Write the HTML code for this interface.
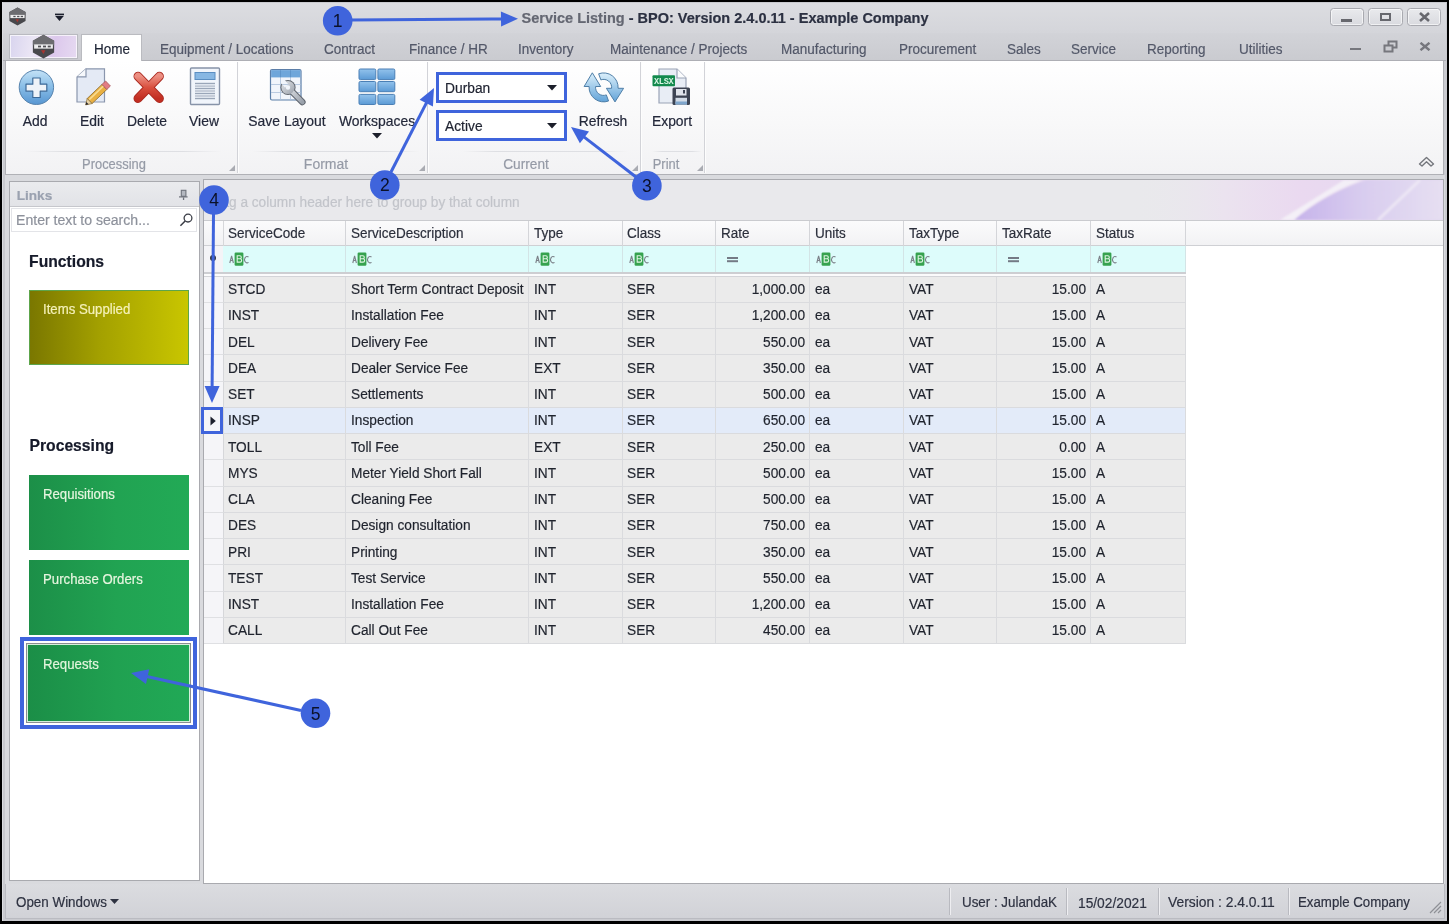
<!DOCTYPE html>
<html><head><meta charset="utf-8">
<style>
*{box-sizing:border-box;margin:0;padding:0}
html,body{width:1449px;height:924px;overflow:hidden;background:#000;font-family:"Liberation Sans",sans-serif;color:#2b2f3b}
div,span,svg{position:absolute}
.t{white-space:nowrap;line-height:1;-webkit-text-stroke:0.2px currentColor}
#root{left:0;top:0;width:1449px;height:924px;will-change:transform}
.gsep{top:62px;width:2px;height:111px;background:linear-gradient(90deg,#d2d3d8 50%,#fdfdfd 50%)}
.gline{top:151px;height:1px;background:linear-gradient(90deg,rgba(222,223,227,0),#dedfe3 20%,#dedfe3 80%,rgba(222,223,227,0))}
.tile{left:29px;width:160px;height:75px}
</style></head><body><div id="root">

<div style="left:2px;top:2px;width:1445px;height:919px;background:#c9cacf;border-left:1px solid #dcdde1"></div>
<div style="left:3px;top:3px;width:1443px;height:30px;background:linear-gradient(#dcdde1,#d4d5da)"></div>
<div style="left:3px;top:33px;width:1443px;height:27px;background:linear-gradient(#d2d3d8,#cacbd0)"></div>
<div style="left:3px;top:60px;width:1443px;height:1px;background:#aeafb5"></div>
<svg style="left:8px;top:7px" width="19" height="19" viewBox="0 0 20 20"><polygon points="10,0.5 18.5,5.3 18.5,14.7 10,19.5 1.5,14.7 1.5,5.3" fill="#48484c"/><polygon points="10,0.5 18.5,5.3 18.5,9 1.5,9 1.5,5.3" fill="#6c6c70"/><rect x="2.5" y="8.3" width="15" height="3.4" fill="#ededee"/><rect x="5.6" y="9.3" width="2.4" height="1.4" fill="#505055"/><rect x="9.6" y="9.3" width="2.4" height="1.4" fill="#505055"/><rect x="13.4" y="9.3" width="2.4" height="1.4" fill="#505055"/><path d="M8 13 l2 3 l1.5 -3z" fill="#a8342f"/></svg>
<svg style="left:55px;top:13px" width="9" height="8" viewBox="0 0 9 8"><rect x="0" y="0.6" width="9" height="1.4" fill="#1b1e2c"/><polygon points="0,2.8 9,2.8 4.5,8" fill="#1b1e2c"/></svg>
<span class="t" style="top:11.13px;font-size:14.50px;color:#646772;font-weight:bold;left:521.5px">Service Listing<span style="position:static;color:#2c3142"> - BPO: Version 2.4.0.11 - Example Company</span></span>
<div style="left:1330px;top:8px;width:34px;height:18px;border:1px solid #a9aab0;border-radius:3.5px;background:linear-gradient(#e9eaed,#d9dadf);box-shadow:inset 0 0 0 1px rgba(255,255,255,0.6)"></div>
<div style="left:1368px;top:8px;width:35px;height:18px;border:1px solid #a9aab0;border-radius:3.5px;background:linear-gradient(#e9eaed,#d9dadf);box-shadow:inset 0 0 0 1px rgba(255,255,255,0.6)"></div>
<div style="left:1407px;top:8px;width:34px;height:18px;border:1px solid #a9aab0;border-radius:3.5px;background:linear-gradient(#e9eaed,#d9dadf);box-shadow:inset 0 0 0 1px rgba(255,255,255,0.6)"></div>
<div style="left:1341px;top:19px;width:11px;height:2.5px;background:#67686e"></div>
<div style="left:1380px;top:13px;width:11px;height:8px;border:2px solid #67686e"></div>
<svg style="left:1418px;top:12px" width="13" height="10" viewBox="0 0 13 10"><path d="M2 1 L11 9 M11 1 L2 9" stroke="#67686e" stroke-width="2.6"/></svg>
<div style="left:1350px;top:48px;width:11px;height:2px;background:#76777d"></div>
<svg style="left:1383px;top:40px" width="15" height="13" viewBox="0 0 15 13"><rect x="5.5" y="1.5" width="8" height="6" fill="none" stroke="#76777d" stroke-width="2"/><rect x="1.5" y="5.5" width="8" height="6" fill="#cbccd1" stroke="#76777d" stroke-width="2"/></svg>
<svg style="left:1419px;top:42px" width="12" height="9" viewBox="0 0 12 9"><path d="M1.5 0.8 L10.5 8.2 M10.5 0.8 L1.5 8.2" stroke="#76777d" stroke-width="2.4"/></svg>
<div style="left:9px;top:34px;width:69px;height:25px;border:1px solid #b9bac0;background:linear-gradient(100deg,#d8d4ee,#ebe6f5 35%,#dcc8ec 65%,#e6daf1)"></div>
<div style="left:10px;top:35px;width:67px;height:23px;border:1px solid rgba(255,255,255,0.7)"></div>
<svg style="left:31px;top:34px" width="25" height="25" viewBox="0 0 20 20"><polygon points="10,0.5 18.5,5.3 18.5,14.7 10,19.5 1.5,14.7 1.5,5.3" fill="#48484c"/><polygon points="10,0.5 18.5,5.3 18.5,9 1.5,9 1.5,5.3" fill="#6c6c70"/><rect x="2.5" y="8.3" width="15" height="3.4" fill="#ededee"/><rect x="5.6" y="9.3" width="2.4" height="1.4" fill="#505055"/><rect x="9.6" y="9.3" width="2.4" height="1.4" fill="#505055"/><rect x="13.4" y="9.3" width="2.4" height="1.4" fill="#505055"/><path d="M8 13 l2 3 l1.5 -3z" fill="#a8342f"/></svg>
<div style="left:81px;top:34px;width:61px;height:28px;background:#fff;border:1px solid #babbc0;border-bottom:none"></div>
<span class="t" style="top:41.90px;font-size:14.18px;color:#1f2536;left:93.5px;transform:scaleX(0.9524);transform-origin:0 0">Home</span>
<span class="t" style="top:41.90px;font-size:14.18px;color:#535869;left:160px;transform:scaleX(0.9524);transform-origin:0 0">Equipment / Locations</span>
<span class="t" style="top:41.90px;font-size:14.18px;color:#535869;left:324px;transform:scaleX(0.9524);transform-origin:0 0">Contract</span>
<span class="t" style="top:41.90px;font-size:14.18px;color:#535869;left:409px;transform:scaleX(0.9524);transform-origin:0 0">Finance / HR</span>
<span class="t" style="top:41.90px;font-size:14.18px;color:#535869;left:518px;transform:scaleX(0.9524);transform-origin:0 0">Inventory</span>
<span class="t" style="top:41.90px;font-size:14.18px;color:#535869;left:610px;transform:scaleX(0.9524);transform-origin:0 0">Maintenance / Projects</span>
<span class="t" style="top:41.90px;font-size:14.18px;color:#535869;left:781px;transform:scaleX(0.9524);transform-origin:0 0">Manufacturing</span>
<span class="t" style="top:41.90px;font-size:14.18px;color:#535869;left:899px;transform:scaleX(0.9524);transform-origin:0 0">Procurement</span>
<span class="t" style="top:41.90px;font-size:14.18px;color:#535869;left:1007px;transform:scaleX(0.9524);transform-origin:0 0">Sales</span>
<span class="t" style="top:41.90px;font-size:14.18px;color:#535869;left:1071px;transform:scaleX(0.9524);transform-origin:0 0">Service</span>
<span class="t" style="top:41.90px;font-size:14.18px;color:#535869;left:1147px;transform:scaleX(0.9524);transform-origin:0 0">Reporting</span>
<span class="t" style="top:41.90px;font-size:14.18px;color:#535869;left:1239px;transform:scaleX(0.9524);transform-origin:0 0">Utilities</span>
<div style="left:5px;top:61px;width:1439px;height:114px;background:linear-gradient(#ffffff,#f8f8f9 55%,#f2f2f4);border:1px solid #b0b1b6;border-top:none"></div>
<div class="gsep" style="left:237px"></div>
<div class="gsep" style="left:427px"></div>
<div class="gsep" style="left:640px"></div>
<div class="gsep" style="left:704px"></div>
<div class="gline" style="left:25px;width:197px"></div>
<div class="gline" style="left:252px;width:168px"></div>
<div class="gline" style="left:462px;width:166px"></div>
<div class="gline" style="left:652px;width:50px"></div>
<span class="t" style="top:156.69px;font-size:14.19px;color:#959aa6;left:53.50px;width:120px;text-align:center;transform:scaleX(0.9091);transform-origin:50% 0">Processing</span>
<span class="t" style="top:155.66px;font-size:15.40px;color:#959aa6;left:266.30px;width:120px;text-align:center;transform:scaleX(0.9091);transform-origin:50% 0">Format</span>
<span class="t" style="top:155.94px;font-size:15.07px;color:#959aa6;left:466.40px;width:120px;text-align:center;transform:scaleX(0.9091);transform-origin:50% 0">Current</span>
<span class="t" style="top:156.69px;font-size:14.19px;color:#959aa6;left:605.50px;width:120px;text-align:center;transform:scaleX(0.9091);transform-origin:50% 0">Print</span>
<svg style="left:229px;top:165px" width="6" height="6" viewBox="0 0 6 6"><polygon points="6,0 6,6 0,6" fill="#a9abb2"/></svg>
<svg style="left:419px;top:165px" width="6" height="6" viewBox="0 0 6 6"><polygon points="6,0 6,6 0,6" fill="#a9abb2"/></svg>
<svg style="left:632px;top:165px" width="6" height="6" viewBox="0 0 6 6"><polygon points="6,0 6,6 0,6" fill="#a9abb2"/></svg>
<svg style="left:697px;top:165px" width="6" height="6" viewBox="0 0 6 6"><polygon points="6,0 6,6 0,6" fill="#a9abb2"/></svg>
<svg style="left:18px;top:69px" width="37" height="37" viewBox="0 0 37 37"><defs><linearGradient id="ga" x1="0" y1="0" x2="0" y2="1"><stop offset="0" stop-color="#c4e2f6"/><stop offset="0.45" stop-color="#8cc0e8"/><stop offset="1" stop-color="#5796d2"/></linearGradient></defs><circle cx="18.4" cy="18.3" r="17.2" fill="url(#ga)" stroke="#5783ad" stroke-width="1"/><path d="M14.8 9 h7.4 v6.2 h6.6 v7 h-6.6 v6.3 h-7.4 v-6.3 h-6.8 v-7 h6.8z" fill="#eef3f8" stroke="#3c6a98" stroke-width="1.2" stroke-linejoin="round"/></svg>
<svg style="left:76px;top:68px" width="37" height="39" viewBox="0 0 37 39"><path d="M10 0.8 h18.5 v33.2 h-27.5 v-25z" fill="#e4eaf5" stroke="#8a96ad" stroke-width="1.2"/><path d="M1 8.8 h9 v-8" fill="#f7f9fc" stroke="#8a96ad" stroke-width="1.2"/><polygon points="11.2,30.5 26.0,16.4 30.8,21.5 16.0,35.6" fill="#e9b042" stroke="#8a6a2c" stroke-width="0.8"/><path d="M13.2 31.6 L27.6 17.9" stroke="#f8dc92" stroke-width="1.5"/><polygon points="26.0,16.4 29.6,13.0 34.4,18.0 30.8,21.5" fill="#e27c83" stroke="#a9585e" stroke-width="0.8"/><polygon points="9.6,36.9 11.2,30.5 16.0,35.6" fill="#e8d3a6" stroke="#8a6a2c" stroke-width="0.7"/><polygon points="9.6,36.9 10.3,34.0 12.6,36.2" fill="#25252b"/></svg>
<svg style="left:132px;top:70px" width="34" height="35" viewBox="0 0 34 35"><defs><linearGradient id="gd" x1="0" y1="0" x2="0" y2="1"><stop offset="0" stop-color="#ec8f82"/><stop offset="0.5" stop-color="#d9503f"/><stop offset="1" stop-color="#c22e22"/></linearGradient></defs><path d="M6 6.3 L27.4 28.4 M27.4 6.3 L6 28.4" stroke="#a9281f" stroke-width="9" stroke-linecap="round"/><path d="M6 6.3 L27.4 28.4 M27.4 6.3 L6 28.4" stroke="url(#gd)" stroke-width="7.2" stroke-linecap="round"/></svg>
<svg style="left:189px;top:67px" width="32" height="39" viewBox="0 0 32 39"><rect x="1.5" y="1" width="29" height="36.5" rx="1" fill="#f1f5fb" stroke="#8793a8" stroke-width="1.4"/><rect x="6" y="5.5" width="20" height="7" fill="#87b7e3" stroke="#5b8ec2" stroke-width="1"/><rect x="6" y="15.8" width="20" height="1.4" fill="#9aa6b8"/><rect x="6" y="18.4" width="20" height="1.4" fill="#b4bdca"/><rect x="6" y="20.8" width="20" height="1.4" fill="#9aa6b8"/><rect x="6" y="23.3" width="20" height="1.4" fill="#b4bdca"/><rect x="6" y="25.8" width="20" height="1.4" fill="#9aa6b8"/><rect x="6" y="28.3" width="20" height="1.4" fill="#b4bdca"/><rect x="6" y="30.8" width="20" height="1.4" fill="#9aa6b8"/></svg>
<svg style="left:269px;top:68px" width="38" height="38" viewBox="0 0 38 38"><defs><mask id="wm" maskUnits="userSpaceOnUse" x="0" y="0" width="38" height="38"><rect x="0" y="0" width="38" height="38" fill="#fff"/><g transform="rotate(-40 19 19.5)"><rect x="16.6" y="9" width="4.8" height="8.5" fill="#000"/></g><circle cx="19" cy="19.5" r="2.2" fill="#000"/></mask><linearGradient id="gwr" x1="0" y1="0" x2="1" y2="1"><stop offset="0" stop-color="#e3e6ea"/><stop offset="1" stop-color="#9aa1ab"/></linearGradient></defs><rect x="1.5" y="1.5" width="30.5" height="30.5" rx="1.5" fill="#f1f5fb" stroke="#5b7ea8" stroke-width="1.2"/><rect x="2.1" y="2.1" width="29.3" height="7.3" fill="#6ea6da"/><g stroke="#b3c6de" stroke-width="0.9"><path d="M2 16.5h29.5M2 24.5h29.5M11.5 9.5v22M21.5 9.5v22"/></g><g stroke="#5a8fc4" stroke-width="0.8"><path d="M11.5 2.2v7.3M21.5 2.2v7.3"/></g><g mask="url(#wm)"><path d="M19 19.5 L33.3 34" stroke="#5f656e" stroke-width="6.6" stroke-linecap="round"/><circle cx="19" cy="19.5" r="7.6" fill="#5f656e"/><path d="M19 19.5 L33.3 34" stroke="url(#gwr)" stroke-width="4.6" stroke-linecap="round"/><circle cx="19" cy="19.5" r="6.6" fill="url(#gwr)"/></g></svg>
<svg style="left:358px;top:68px" width="38" height="38" viewBox="0 0 38 38"><defs><linearGradient id="gw" x1="0" y1="0" x2="0" y2="1"><stop offset="0" stop-color="#93c3ec"/><stop offset="1" stop-color="#5b9ad5"/></linearGradient></defs><rect x="1" y="1" width="16.8" height="10.6" rx="1.3" fill="url(#gw)" stroke="#4a7fb5" stroke-width="1"/><rect x="19.9" y="1" width="16.9" height="10.6" rx="1.3" fill="url(#gw)" stroke="#4a7fb5" stroke-width="1"/><rect x="1" y="13.5" width="16.8" height="10.2" rx="1.3" fill="url(#gw)" stroke="#4a7fb5" stroke-width="1"/><rect x="19.9" y="13.5" width="16.9" height="10.2" rx="1.3" fill="url(#gw)" stroke="#4a7fb5" stroke-width="1"/><rect x="1" y="26.4" width="16.8" height="10.100000000000001" rx="1.3" fill="url(#gw)" stroke="#4a7fb5" stroke-width="1"/><rect x="19.9" y="26.4" width="16.9" height="10.100000000000001" rx="1.3" fill="url(#gw)" stroke="#4a7fb5" stroke-width="1"/></svg>
<svg style="left:372px;top:133px" width="10" height="6" viewBox="0 0 10 6"><polygon points="0,0 10,0 5,5.5" fill="#1c1f2b"/></svg>
<svg style="left:582px;top:71px" width="44" height="34" viewBox="0 0 44 34"><defs><linearGradient id="gr" x1="0" y1="0" x2="0" y2="1"><stop offset="0" stop-color="#dcf0fb"/><stop offset="1" stop-color="#62a3d8"/></linearGradient></defs><path d="M16.64 2.8 A14.5 14.5 0 0 1 36.1 17.3 L41.6 17.3 L33 30.9 L24.4 17.3 L29.6 17.3 A8 8 0 0 0 18.86 8.88 Z" fill="url(#gr)" stroke="#4f7fa8" stroke-width="1" stroke-linejoin="round"/><path d="M26.56 30 A14.5 14.5 0 0 1 7.1 15.5 L2.1 15.5 L10.3 1.8 L18.7 15.5 L13.6 15.5 A8 8 0 0 0 24.34 23.92 Z" fill="url(#gr)" stroke="#4f7fa8" stroke-width="1" stroke-linejoin="round"/></svg>
<svg style="left:651px;top:68px" width="41" height="39" viewBox="0 0 41 39"><path d="M8 1 h18 l9 9 v25 h-27z" fill="#e8edf5" stroke="#9aa3b6" stroke-width="1.2"/><path d="M26 1 v9 h9" fill="#fbfcfd" stroke="#9aa3b6" stroke-width="1.2"/><rect x="1.5" y="7.3" width="22.5" height="11" rx="1" fill="#138a4d"/><text x="12.7" y="16" font-size="8.6" font-family="Liberation Mono" font-weight="bold" fill="#d9f5e4" text-anchor="middle" letter-spacing="-0.3">XLSX</text><rect x="21.5" y="19.5" width="17.5" height="17.5" rx="1.5" fill="#3c4352"/><rect x="25" y="21" width="10.5" height="6.5" fill="#dfe3ea"/><rect x="32" y="22" width="2" height="3.5" fill="#3c4352"/><rect x="24.5" y="29.8" width="11.5" height="6.8" fill="#d2dbe6"/><rect x="24.5" y="33.5" width="11.5" height="3" fill="#7fa6cc"/></svg>
<span class="t" style="top:113.55px;font-size:14.60px;color:#23283a;left:-19.80px;width:110px;text-align:center;transform:scaleX(0.9524);transform-origin:50% 0">Add</span>
<span class="t" style="top:113.55px;font-size:14.60px;color:#23283a;left:37.00px;width:110px;text-align:center;transform:scaleX(0.9524);transform-origin:50% 0">Edit</span>
<span class="t" style="top:113.55px;font-size:14.60px;color:#23283a;left:92.30px;width:110px;text-align:center;transform:scaleX(0.9524);transform-origin:50% 0">Delete</span>
<span class="t" style="top:113.55px;font-size:14.60px;color:#23283a;left:149.20px;width:110px;text-align:center;transform:scaleX(0.9524);transform-origin:50% 0">View</span>
<span class="t" style="top:113.55px;font-size:14.60px;color:#23283a;left:232.30px;width:110px;text-align:center;transform:scaleX(0.9524);transform-origin:50% 0">Save Layout</span>
<span class="t" style="top:113.55px;font-size:14.60px;color:#23283a;left:321.90px;width:110px;text-align:center;transform:scaleX(0.9524);transform-origin:50% 0">Workspaces</span>
<span class="t" style="top:113.55px;font-size:14.60px;color:#23283a;left:547.70px;width:110px;text-align:center;transform:scaleX(0.9524);transform-origin:50% 0">Refresh</span>
<span class="t" style="top:113.55px;font-size:14.60px;color:#23283a;left:617.00px;width:110px;text-align:center;transform:scaleX(0.9524);transform-origin:50% 0">Export</span>
<div style="left:436px;top:72px;width:131px;height:31px;border:3px solid #3f64dc;background:#fff"></div>
<span class="t" style="top:80.93px;font-size:14.49px;color:#1e2230;left:444.5px;transform:scaleX(0.9524);transform-origin:0 0">Durban</span>
<svg style="left:547px;top:85px" width="10" height="6" viewBox="0 0 10 6"><polygon points="0,0 10,0 5,5.5" fill="#1c1f2b"/></svg>
<div style="left:436px;top:110px;width:131px;height:31px;border:3px solid #3f64dc;background:#fff"></div>
<span class="t" style="top:118.93px;font-size:14.49px;color:#1e2230;left:444.5px;transform:scaleX(0.9524);transform-origin:0 0">Active</span>
<svg style="left:547px;top:123px" width="10" height="6" viewBox="0 0 10 6"><polygon points="0,0 10,0 5,5.5" fill="#1c1f2b"/></svg>
<svg style="left:1418px;top:155px" width="17" height="12" viewBox="0 0 17 12"><path d="M1.5 9 L8.5 2.5 L15.5 9 L13 11 L8.5 6.8 L4 11z" fill="#f4f4f5" stroke="#75777d" stroke-width="1.4" stroke-linejoin="round"/></svg>
<div style="left:5px;top:175px;width:1440px;height:709px;background:#d9dade"></div>
<div style="left:9px;top:181px;width:191px;height:700px;background:#fff;border:1px solid #a9aaaf"></div>
<div style="left:10px;top:182px;width:189px;height:25px;background:linear-gradient(#eaebee,#e2e3e7);border-bottom:1px solid #c6c7cc"></div>
<span class="t" style="top:188.89px;font-size:13.60px;color:#9ba2b0;font-weight:bold;left:16.7px">Links</span>
<svg style="left:178px;top:189px" width="10" height="12" viewBox="0 0 10 12"><rect x="3.3" y="1.3" width="4.6" height="6" fill="#b4b8c0" stroke="#6f737c" stroke-width="1.1"/><rect x="1" y="7.3" width="8.6" height="1.2" fill="#6f737c"/><rect x="4.9" y="8.4" width="1.3" height="2.6" fill="#6f737c"/></svg>
<div style="left:11px;top:208px;width:186px;height:24px;background:#fff;border:1px solid #e3e4e8"></div>
<span class="t" style="top:213.09px;font-size:14.66px;color:#8d919b;left:15.8px;transform:scaleX(0.9615);transform-origin:0 0">Enter text to search...</span>
<svg style="left:178px;top:212px" width="16" height="16" viewBox="0 0 16 16"><circle cx="10" cy="6.1" r="3.9" fill="none" stroke="#3a3d46" stroke-width="1.3"/><path d="M7.2 9 L2.4 13.8" stroke="#3a3d46" stroke-width="1.5"/></svg>
<span class="t" style="top:253.61px;font-size:15.70px;color:#161a2a;font-weight:bold;left:29.1px">Functions</span>
<span class="t" style="top:438.41px;font-size:15.70px;color:#161a2a;font-weight:bold;left:29.5px">Processing</span>
<div class="tile" style="top:290px;background:linear-gradient(90deg,#7a7700,#a4a100 45%,#c9c600);border:1px solid #5da54b"></div>
<span class="t" style="top:302.41px;font-size:14.52px;color:#f5f1b8;left:43.3px;transform:scaleX(0.9091);transform-origin:0 0">Items Supplied</span>
<div class="tile" style="top:475px;height:75px;background:linear-gradient(90deg,#1c8f48,#21a352 55%,#22aa56)"></div>
<span class="t" style="top:487.21px;font-size:14.52px;color:#e6f5df;left:42.8px;transform:scaleX(0.9091);transform-origin:0 0">Requisitions</span>
<div class="tile" style="top:560px;height:75px;background:linear-gradient(90deg,#1c8f48,#21a352 55%,#22aa56)"></div>
<span class="t" style="top:572.21px;font-size:14.52px;color:#e6f5df;left:42.8px;transform:scaleX(0.9091);transform-origin:0 0">Purchase Orders</span>
<div style="left:20px;top:637px;width:177px;height:92px;border:4px solid #3f64dc;background:#fff"></div>
<div style="left:26px;top:642.5px;width:165px;height:80.5px;border:1px solid #8b8d92;background:#d6efdc"></div>
<div style="left:28px;top:644.5px;width:161px;height:76.5px;background:linear-gradient(90deg,#1b8e47,#20a151 55%,#21a956)"></div>
<span class="t" style="top:657.01px;font-size:14.52px;color:#e2f5dc;left:42.8px;transform:scaleX(0.9091);transform-origin:0 0">Requests</span>
<div style="left:203px;top:179px;width:1241px;height:705px;background:#fff;border:1px solid #a9aaaf"></div>
<div style="left:204px;top:180px;width:1239px;height:41px;background:#e9e9ec;border-bottom:1px solid #cacbcf"></div>
<svg style="left:1130px;top:180px" width="313" height="40" viewBox="0 0 313 40"><defs><linearGradient id="sw0" x1="0" x2="1" y1="0" y2="0"><stop offset="0" stop-color="#e9e9ec" stop-opacity="0"/><stop offset="0.3" stop-color="#ebe3ef"/><stop offset="0.55" stop-color="#ead9f0"/><stop offset="1" stop-color="#e2d8f0"/></linearGradient><linearGradient id="sw1" x1="0" x2="1" y1="0" y2="0"><stop offset="0" stop-color="#c6b3ea"/><stop offset="0.45" stop-color="#d8ccef"/><stop offset="1" stop-color="#e6dff2"/></linearGradient><filter id="bl"><feGaussianBlur stdDeviation="1.2"/></filter></defs><rect x="0" y="0" width="313" height="40" fill="url(#sw0)"/><g filter="url(#bl)"><path d="M164 40 Q195 14 236 0 L313 0 L313 40z" fill="url(#sw1)"/><path d="M150 40 L214 0 L232 0 Q190 16 164 40z" fill="#f6f3f8" opacity="0.85"/><path d="M248 40 L290 0" stroke="#f0ebf6" stroke-width="3" opacity="0.8"/></g></svg>
<span class="t" style="top:193.79px;font-size:15.02px;color:#c2c4ca;left:206.8px;transform:scaleX(0.9091);transform-origin:0 0">Drag a column header here to group by that column</span>
<div style="left:204px;top:221px;width:1239px;height:25px;background:linear-gradient(#fbfbfc,#f2f2f4);border-bottom:1px solid #cfd0d4"></div>
<div style="left:204px;top:221px;width:19.5px;height:25px;border-right:1px solid #d6d7da"></div>
<div style="left:223px;top:221px;width:123px;height:25px;border-right:1px solid #d4d5d9"></div>
<span class="t" style="top:225.83px;font-size:14.85px;color:#2b2f3b;left:227.5px;transform:scaleX(0.9091);transform-origin:0 0">ServiceCode</span>
<div style="left:346px;top:221px;width:183px;height:25px;border-right:1px solid #d4d5d9"></div>
<span class="t" style="top:225.83px;font-size:14.85px;color:#2b2f3b;left:350.5px;transform:scaleX(0.9091);transform-origin:0 0">ServiceDescription</span>
<div style="left:529px;top:221px;width:93.5px;height:25px;border-right:1px solid #d4d5d9"></div>
<span class="t" style="top:225.83px;font-size:14.85px;color:#2b2f3b;left:533.5px;transform:scaleX(0.9091);transform-origin:0 0">Type</span>
<div style="left:622.5px;top:221px;width:93.5px;height:25px;border-right:1px solid #d4d5d9"></div>
<span class="t" style="top:225.83px;font-size:14.85px;color:#2b2f3b;left:627.0px;transform:scaleX(0.9091);transform-origin:0 0">Class</span>
<div style="left:716px;top:221px;width:94px;height:25px;border-right:1px solid #d4d5d9"></div>
<span class="t" style="top:225.83px;font-size:14.85px;color:#2b2f3b;left:720.5px;transform:scaleX(0.9091);transform-origin:0 0">Rate</span>
<div style="left:810px;top:221px;width:94px;height:25px;border-right:1px solid #d4d5d9"></div>
<span class="t" style="top:225.83px;font-size:14.85px;color:#2b2f3b;left:814.5px;transform:scaleX(0.9091);transform-origin:0 0">Units</span>
<div style="left:904px;top:221px;width:93px;height:25px;border-right:1px solid #d4d5d9"></div>
<span class="t" style="top:225.83px;font-size:14.85px;color:#2b2f3b;left:908.5px;transform:scaleX(0.9091);transform-origin:0 0">TaxType</span>
<div style="left:997px;top:221px;width:94px;height:25px;border-right:1px solid #d4d5d9"></div>
<span class="t" style="top:225.83px;font-size:14.85px;color:#2b2f3b;left:1001.5px;transform:scaleX(0.9091);transform-origin:0 0">TaxRate</span>
<div style="left:1091px;top:221px;width:95px;height:25px;border-right:1px solid #d4d5d9"></div>
<span class="t" style="top:225.83px;font-size:14.85px;color:#2b2f3b;left:1095.5px;transform:scaleX(0.9091);transform-origin:0 0">Status</span>
<div style="left:204px;top:246px;width:19.5px;height:26px;background:#f4f4f7;border-right:1px solid #d6d7da"></div>
<div style="left:223px;top:246px;width:963px;height:26px;background:#ddfcfb"></div>
<div style="left:223px;top:246px;width:123px;height:26px;border-right:1px solid #d3e4e6"></div>
<svg style="left:229px;top:252px" width="21" height="15" viewBox="0 0 21 15"><path d="M0.8 11 L2.6 4 L4.4 11 M1.4 8.5 h2.4" stroke="#7b8088" stroke-width="1.1" fill="none"/><rect x="5.6" y="0.6" width="8.8" height="13.2" rx="1.2" fill="#36a24f"/><path d="M8.2 3.8 h2.6 a1.4 1.4 0 0 1 0 3 h-2.6z M8.2 6.8 h2.8 a1.6 1.6 0 0 1 0 3.3 h-2.8z" fill="none" stroke="#dff5e3" stroke-width="1.1"/><path d="M19.5 5 a2.6 3.2 0 1 0 0 5.4" stroke="#7b8088" stroke-width="1.1" fill="none"/></svg>
<div style="left:346px;top:246px;width:183px;height:26px;border-right:1px solid #d3e4e6"></div>
<svg style="left:352px;top:252px" width="21" height="15" viewBox="0 0 21 15"><path d="M0.8 11 L2.6 4 L4.4 11 M1.4 8.5 h2.4" stroke="#7b8088" stroke-width="1.1" fill="none"/><rect x="5.6" y="0.6" width="8.8" height="13.2" rx="1.2" fill="#36a24f"/><path d="M8.2 3.8 h2.6 a1.4 1.4 0 0 1 0 3 h-2.6z M8.2 6.8 h2.8 a1.6 1.6 0 0 1 0 3.3 h-2.8z" fill="none" stroke="#dff5e3" stroke-width="1.1"/><path d="M19.5 5 a2.6 3.2 0 1 0 0 5.4" stroke="#7b8088" stroke-width="1.1" fill="none"/></svg>
<div style="left:529px;top:246px;width:93.5px;height:26px;border-right:1px solid #d3e4e6"></div>
<svg style="left:535px;top:252px" width="21" height="15" viewBox="0 0 21 15"><path d="M0.8 11 L2.6 4 L4.4 11 M1.4 8.5 h2.4" stroke="#7b8088" stroke-width="1.1" fill="none"/><rect x="5.6" y="0.6" width="8.8" height="13.2" rx="1.2" fill="#36a24f"/><path d="M8.2 3.8 h2.6 a1.4 1.4 0 0 1 0 3 h-2.6z M8.2 6.8 h2.8 a1.6 1.6 0 0 1 0 3.3 h-2.8z" fill="none" stroke="#dff5e3" stroke-width="1.1"/><path d="M19.5 5 a2.6 3.2 0 1 0 0 5.4" stroke="#7b8088" stroke-width="1.1" fill="none"/></svg>
<div style="left:622.5px;top:246px;width:93.5px;height:26px;border-right:1px solid #d3e4e6"></div>
<svg style="left:628.5px;top:252px" width="21" height="15" viewBox="0 0 21 15"><path d="M0.8 11 L2.6 4 L4.4 11 M1.4 8.5 h2.4" stroke="#7b8088" stroke-width="1.1" fill="none"/><rect x="5.6" y="0.6" width="8.8" height="13.2" rx="1.2" fill="#36a24f"/><path d="M8.2 3.8 h2.6 a1.4 1.4 0 0 1 0 3 h-2.6z M8.2 6.8 h2.8 a1.6 1.6 0 0 1 0 3.3 h-2.8z" fill="none" stroke="#dff5e3" stroke-width="1.1"/><path d="M19.5 5 a2.6 3.2 0 1 0 0 5.4" stroke="#7b8088" stroke-width="1.1" fill="none"/></svg>
<div style="left:716px;top:246px;width:94px;height:26px;border-right:1px solid #d3e4e6"></div>
<div style="left:726.5px;top:257.2px;width:11.5px;height:1.5px;background:#747a85;box-shadow:0 3.2px 0 #747a85"></div>
<div style="left:810px;top:246px;width:94px;height:26px;border-right:1px solid #d3e4e6"></div>
<svg style="left:816px;top:252px" width="21" height="15" viewBox="0 0 21 15"><path d="M0.8 11 L2.6 4 L4.4 11 M1.4 8.5 h2.4" stroke="#7b8088" stroke-width="1.1" fill="none"/><rect x="5.6" y="0.6" width="8.8" height="13.2" rx="1.2" fill="#36a24f"/><path d="M8.2 3.8 h2.6 a1.4 1.4 0 0 1 0 3 h-2.6z M8.2 6.8 h2.8 a1.6 1.6 0 0 1 0 3.3 h-2.8z" fill="none" stroke="#dff5e3" stroke-width="1.1"/><path d="M19.5 5 a2.6 3.2 0 1 0 0 5.4" stroke="#7b8088" stroke-width="1.1" fill="none"/></svg>
<div style="left:904px;top:246px;width:93px;height:26px;border-right:1px solid #d3e4e6"></div>
<svg style="left:910px;top:252px" width="21" height="15" viewBox="0 0 21 15"><path d="M0.8 11 L2.6 4 L4.4 11 M1.4 8.5 h2.4" stroke="#7b8088" stroke-width="1.1" fill="none"/><rect x="5.6" y="0.6" width="8.8" height="13.2" rx="1.2" fill="#36a24f"/><path d="M8.2 3.8 h2.6 a1.4 1.4 0 0 1 0 3 h-2.6z M8.2 6.8 h2.8 a1.6 1.6 0 0 1 0 3.3 h-2.8z" fill="none" stroke="#dff5e3" stroke-width="1.1"/><path d="M19.5 5 a2.6 3.2 0 1 0 0 5.4" stroke="#7b8088" stroke-width="1.1" fill="none"/></svg>
<div style="left:997px;top:246px;width:94px;height:26px;border-right:1px solid #d3e4e6"></div>
<div style="left:1007.5px;top:257.2px;width:11.5px;height:1.5px;background:#747a85;box-shadow:0 3.2px 0 #747a85"></div>
<div style="left:1091px;top:246px;width:95px;height:26px;border-right:1px solid #d3e4e6"></div>
<svg style="left:1097px;top:252px" width="21" height="15" viewBox="0 0 21 15"><path d="M0.8 11 L2.6 4 L4.4 11 M1.4 8.5 h2.4" stroke="#7b8088" stroke-width="1.1" fill="none"/><rect x="5.6" y="0.6" width="8.8" height="13.2" rx="1.2" fill="#36a24f"/><path d="M8.2 3.8 h2.6 a1.4 1.4 0 0 1 0 3 h-2.6z M8.2 6.8 h2.8 a1.6 1.6 0 0 1 0 3.3 h-2.8z" fill="none" stroke="#dff5e3" stroke-width="1.1"/><path d="M19.5 5 a2.6 3.2 0 1 0 0 5.4" stroke="#7b8088" stroke-width="1.1" fill="none"/></svg>
<div style="left:210px;top:254.5px;width:6px;height:6px;border-radius:50%;background:#33363e"></div>
<div style="left:204px;top:271.5px;width:982px;height:2px;background:#cdced2"></div>
<div style="left:204px;top:273.5px;width:982px;height:2px;background:#fbfbfc"></div>
<div style="left:204px;top:275.5px;width:982px;height:1px;background:#d3d4d8"></div>
<div style="left:223px;top:276.50px;width:963px;height:26.25px;background:#ebebeb;border-bottom:1px solid #dadbde"></div>
<div style="left:204px;top:276.50px;width:19.5px;height:26.25px;background:#f5f5f8;border-right:1px solid #d6d7da;border-bottom:1px solid #dfe0e3"></div>
<div style="left:223px;top:276.50px;width:123px;height:26.25px;border-right:1px solid #dadbde"></div>
<span class="t" style="top:281.14px;font-size:15.07px;color:#1f232d;left:227.5px;transform:scaleX(0.9091);transform-origin:0 0">STCD</span>
<div style="left:346px;top:276.50px;width:183px;height:26.25px;border-right:1px solid #dadbde"></div>
<span class="t" style="top:281.14px;font-size:15.07px;color:#1f232d;left:350.5px;transform:scaleX(0.9091);transform-origin:0 0">Short Term Contract Deposit</span>
<div style="left:529px;top:276.50px;width:93.5px;height:26.25px;border-right:1px solid #dadbde"></div>
<span class="t" style="top:281.14px;font-size:15.07px;color:#1f232d;left:533.5px;transform:scaleX(0.9091);transform-origin:0 0">INT</span>
<div style="left:622.5px;top:276.50px;width:93.5px;height:26.25px;border-right:1px solid #dadbde"></div>
<span class="t" style="top:281.14px;font-size:15.07px;color:#1f232d;left:627.0px;transform:scaleX(0.9091);transform-origin:0 0">SER</span>
<div style="left:716px;top:276.50px;width:94px;height:26.25px;border-right:1px solid #dadbde"></div>
<span class="t" style="top:281.14px;font-size:15.07px;color:#1f232d;left:685.00px;width:120px;text-align:right;transform:scaleX(0.9091);transform-origin:100% 0">1,000.00</span>
<div style="left:810px;top:276.50px;width:94px;height:26.25px;border-right:1px solid #dadbde"></div>
<span class="t" style="top:281.14px;font-size:15.07px;color:#1f232d;left:814.5px;transform:scaleX(0.9091);transform-origin:0 0">ea</span>
<div style="left:904px;top:276.50px;width:93px;height:26.25px;border-right:1px solid #dadbde"></div>
<span class="t" style="top:281.14px;font-size:15.07px;color:#1f232d;left:908.5px;transform:scaleX(0.9091);transform-origin:0 0">VAT</span>
<div style="left:997px;top:276.50px;width:94px;height:26.25px;border-right:1px solid #dadbde"></div>
<span class="t" style="top:281.14px;font-size:15.07px;color:#1f232d;left:966.00px;width:120px;text-align:right;transform:scaleX(0.9091);transform-origin:100% 0">15.00</span>
<div style="left:1091px;top:276.50px;width:95px;height:26.25px;border-right:1px solid #dadbde"></div>
<span class="t" style="top:281.14px;font-size:15.07px;color:#1f232d;left:1095.5px;transform:scaleX(0.9091);transform-origin:0 0">A</span>
<div style="left:223px;top:302.75px;width:963px;height:26.25px;background:#ebebeb;border-bottom:1px solid #dadbde"></div>
<div style="left:204px;top:302.75px;width:19.5px;height:26.25px;background:#f5f5f8;border-right:1px solid #d6d7da;border-bottom:1px solid #dfe0e3"></div>
<div style="left:223px;top:302.75px;width:123px;height:26.25px;border-right:1px solid #dadbde"></div>
<span class="t" style="top:307.39px;font-size:15.07px;color:#1f232d;left:227.5px;transform:scaleX(0.9091);transform-origin:0 0">INST</span>
<div style="left:346px;top:302.75px;width:183px;height:26.25px;border-right:1px solid #dadbde"></div>
<span class="t" style="top:307.39px;font-size:15.07px;color:#1f232d;left:350.5px;transform:scaleX(0.9091);transform-origin:0 0">Installation Fee</span>
<div style="left:529px;top:302.75px;width:93.5px;height:26.25px;border-right:1px solid #dadbde"></div>
<span class="t" style="top:307.39px;font-size:15.07px;color:#1f232d;left:533.5px;transform:scaleX(0.9091);transform-origin:0 0">INT</span>
<div style="left:622.5px;top:302.75px;width:93.5px;height:26.25px;border-right:1px solid #dadbde"></div>
<span class="t" style="top:307.39px;font-size:15.07px;color:#1f232d;left:627.0px;transform:scaleX(0.9091);transform-origin:0 0">SER</span>
<div style="left:716px;top:302.75px;width:94px;height:26.25px;border-right:1px solid #dadbde"></div>
<span class="t" style="top:307.39px;font-size:15.07px;color:#1f232d;left:685.00px;width:120px;text-align:right;transform:scaleX(0.9091);transform-origin:100% 0">1,200.00</span>
<div style="left:810px;top:302.75px;width:94px;height:26.25px;border-right:1px solid #dadbde"></div>
<span class="t" style="top:307.39px;font-size:15.07px;color:#1f232d;left:814.5px;transform:scaleX(0.9091);transform-origin:0 0">ea</span>
<div style="left:904px;top:302.75px;width:93px;height:26.25px;border-right:1px solid #dadbde"></div>
<span class="t" style="top:307.39px;font-size:15.07px;color:#1f232d;left:908.5px;transform:scaleX(0.9091);transform-origin:0 0">VAT</span>
<div style="left:997px;top:302.75px;width:94px;height:26.25px;border-right:1px solid #dadbde"></div>
<span class="t" style="top:307.39px;font-size:15.07px;color:#1f232d;left:966.00px;width:120px;text-align:right;transform:scaleX(0.9091);transform-origin:100% 0">15.00</span>
<div style="left:1091px;top:302.75px;width:95px;height:26.25px;border-right:1px solid #dadbde"></div>
<span class="t" style="top:307.39px;font-size:15.07px;color:#1f232d;left:1095.5px;transform:scaleX(0.9091);transform-origin:0 0">A</span>
<div style="left:223px;top:329.00px;width:963px;height:26.25px;background:#ebebeb;border-bottom:1px solid #dadbde"></div>
<div style="left:204px;top:329.00px;width:19.5px;height:26.25px;background:#f5f5f8;border-right:1px solid #d6d7da;border-bottom:1px solid #dfe0e3"></div>
<div style="left:223px;top:329.00px;width:123px;height:26.25px;border-right:1px solid #dadbde"></div>
<span class="t" style="top:333.64px;font-size:15.07px;color:#1f232d;left:227.5px;transform:scaleX(0.9091);transform-origin:0 0">DEL</span>
<div style="left:346px;top:329.00px;width:183px;height:26.25px;border-right:1px solid #dadbde"></div>
<span class="t" style="top:333.64px;font-size:15.07px;color:#1f232d;left:350.5px;transform:scaleX(0.9091);transform-origin:0 0">Delivery Fee</span>
<div style="left:529px;top:329.00px;width:93.5px;height:26.25px;border-right:1px solid #dadbde"></div>
<span class="t" style="top:333.64px;font-size:15.07px;color:#1f232d;left:533.5px;transform:scaleX(0.9091);transform-origin:0 0">INT</span>
<div style="left:622.5px;top:329.00px;width:93.5px;height:26.25px;border-right:1px solid #dadbde"></div>
<span class="t" style="top:333.64px;font-size:15.07px;color:#1f232d;left:627.0px;transform:scaleX(0.9091);transform-origin:0 0">SER</span>
<div style="left:716px;top:329.00px;width:94px;height:26.25px;border-right:1px solid #dadbde"></div>
<span class="t" style="top:333.64px;font-size:15.07px;color:#1f232d;left:685.00px;width:120px;text-align:right;transform:scaleX(0.9091);transform-origin:100% 0">550.00</span>
<div style="left:810px;top:329.00px;width:94px;height:26.25px;border-right:1px solid #dadbde"></div>
<span class="t" style="top:333.64px;font-size:15.07px;color:#1f232d;left:814.5px;transform:scaleX(0.9091);transform-origin:0 0">ea</span>
<div style="left:904px;top:329.00px;width:93px;height:26.25px;border-right:1px solid #dadbde"></div>
<span class="t" style="top:333.64px;font-size:15.07px;color:#1f232d;left:908.5px;transform:scaleX(0.9091);transform-origin:0 0">VAT</span>
<div style="left:997px;top:329.00px;width:94px;height:26.25px;border-right:1px solid #dadbde"></div>
<span class="t" style="top:333.64px;font-size:15.07px;color:#1f232d;left:966.00px;width:120px;text-align:right;transform:scaleX(0.9091);transform-origin:100% 0">15.00</span>
<div style="left:1091px;top:329.00px;width:95px;height:26.25px;border-right:1px solid #dadbde"></div>
<span class="t" style="top:333.64px;font-size:15.07px;color:#1f232d;left:1095.5px;transform:scaleX(0.9091);transform-origin:0 0">A</span>
<div style="left:223px;top:355.25px;width:963px;height:26.25px;background:#ebebeb;border-bottom:1px solid #dadbde"></div>
<div style="left:204px;top:355.25px;width:19.5px;height:26.25px;background:#f5f5f8;border-right:1px solid #d6d7da;border-bottom:1px solid #dfe0e3"></div>
<div style="left:223px;top:355.25px;width:123px;height:26.25px;border-right:1px solid #dadbde"></div>
<span class="t" style="top:359.89px;font-size:15.07px;color:#1f232d;left:227.5px;transform:scaleX(0.9091);transform-origin:0 0">DEA</span>
<div style="left:346px;top:355.25px;width:183px;height:26.25px;border-right:1px solid #dadbde"></div>
<span class="t" style="top:359.89px;font-size:15.07px;color:#1f232d;left:350.5px;transform:scaleX(0.9091);transform-origin:0 0">Dealer Service Fee</span>
<div style="left:529px;top:355.25px;width:93.5px;height:26.25px;border-right:1px solid #dadbde"></div>
<span class="t" style="top:359.89px;font-size:15.07px;color:#1f232d;left:533.5px;transform:scaleX(0.9091);transform-origin:0 0">EXT</span>
<div style="left:622.5px;top:355.25px;width:93.5px;height:26.25px;border-right:1px solid #dadbde"></div>
<span class="t" style="top:359.89px;font-size:15.07px;color:#1f232d;left:627.0px;transform:scaleX(0.9091);transform-origin:0 0">SER</span>
<div style="left:716px;top:355.25px;width:94px;height:26.25px;border-right:1px solid #dadbde"></div>
<span class="t" style="top:359.89px;font-size:15.07px;color:#1f232d;left:685.00px;width:120px;text-align:right;transform:scaleX(0.9091);transform-origin:100% 0">350.00</span>
<div style="left:810px;top:355.25px;width:94px;height:26.25px;border-right:1px solid #dadbde"></div>
<span class="t" style="top:359.89px;font-size:15.07px;color:#1f232d;left:814.5px;transform:scaleX(0.9091);transform-origin:0 0">ea</span>
<div style="left:904px;top:355.25px;width:93px;height:26.25px;border-right:1px solid #dadbde"></div>
<span class="t" style="top:359.89px;font-size:15.07px;color:#1f232d;left:908.5px;transform:scaleX(0.9091);transform-origin:0 0">VAT</span>
<div style="left:997px;top:355.25px;width:94px;height:26.25px;border-right:1px solid #dadbde"></div>
<span class="t" style="top:359.89px;font-size:15.07px;color:#1f232d;left:966.00px;width:120px;text-align:right;transform:scaleX(0.9091);transform-origin:100% 0">15.00</span>
<div style="left:1091px;top:355.25px;width:95px;height:26.25px;border-right:1px solid #dadbde"></div>
<span class="t" style="top:359.89px;font-size:15.07px;color:#1f232d;left:1095.5px;transform:scaleX(0.9091);transform-origin:0 0">A</span>
<div style="left:223px;top:381.50px;width:963px;height:26.25px;background:#ebebeb;border-bottom:1px solid #dadbde"></div>
<div style="left:204px;top:381.50px;width:19.5px;height:26.25px;background:#f5f5f8;border-right:1px solid #d6d7da;border-bottom:1px solid #dfe0e3"></div>
<div style="left:223px;top:381.50px;width:123px;height:26.25px;border-right:1px solid #dadbde"></div>
<span class="t" style="top:386.14px;font-size:15.07px;color:#1f232d;left:227.5px;transform:scaleX(0.9091);transform-origin:0 0">SET</span>
<div style="left:346px;top:381.50px;width:183px;height:26.25px;border-right:1px solid #dadbde"></div>
<span class="t" style="top:386.14px;font-size:15.07px;color:#1f232d;left:350.5px;transform:scaleX(0.9091);transform-origin:0 0">Settlements</span>
<div style="left:529px;top:381.50px;width:93.5px;height:26.25px;border-right:1px solid #dadbde"></div>
<span class="t" style="top:386.14px;font-size:15.07px;color:#1f232d;left:533.5px;transform:scaleX(0.9091);transform-origin:0 0">INT</span>
<div style="left:622.5px;top:381.50px;width:93.5px;height:26.25px;border-right:1px solid #dadbde"></div>
<span class="t" style="top:386.14px;font-size:15.07px;color:#1f232d;left:627.0px;transform:scaleX(0.9091);transform-origin:0 0">SER</span>
<div style="left:716px;top:381.50px;width:94px;height:26.25px;border-right:1px solid #dadbde"></div>
<span class="t" style="top:386.14px;font-size:15.07px;color:#1f232d;left:685.00px;width:120px;text-align:right;transform:scaleX(0.9091);transform-origin:100% 0">500.00</span>
<div style="left:810px;top:381.50px;width:94px;height:26.25px;border-right:1px solid #dadbde"></div>
<span class="t" style="top:386.14px;font-size:15.07px;color:#1f232d;left:814.5px;transform:scaleX(0.9091);transform-origin:0 0">ea</span>
<div style="left:904px;top:381.50px;width:93px;height:26.25px;border-right:1px solid #dadbde"></div>
<span class="t" style="top:386.14px;font-size:15.07px;color:#1f232d;left:908.5px;transform:scaleX(0.9091);transform-origin:0 0">VAT</span>
<div style="left:997px;top:381.50px;width:94px;height:26.25px;border-right:1px solid #dadbde"></div>
<span class="t" style="top:386.14px;font-size:15.07px;color:#1f232d;left:966.00px;width:120px;text-align:right;transform:scaleX(0.9091);transform-origin:100% 0">15.00</span>
<div style="left:1091px;top:381.50px;width:95px;height:26.25px;border-right:1px solid #dadbde"></div>
<span class="t" style="top:386.14px;font-size:15.07px;color:#1f232d;left:1095.5px;transform:scaleX(0.9091);transform-origin:0 0">A</span>
<div style="left:223px;top:407.75px;width:963px;height:26.25px;background:#e3ebf9;border-bottom:1px solid #dadbde"></div>
<div style="left:204px;top:407.75px;width:19.5px;height:26.25px;background:#f5f5f8;border-right:1px solid #d6d7da;border-bottom:1px solid #dfe0e3"></div>
<div style="left:223px;top:407.75px;width:123px;height:26.25px;border-right:1px solid #dadbde"></div>
<span class="t" style="top:412.39px;font-size:15.07px;color:#1f232d;left:227.5px;transform:scaleX(0.9091);transform-origin:0 0">INSP</span>
<div style="left:346px;top:407.75px;width:183px;height:26.25px;border-right:1px solid #dadbde"></div>
<span class="t" style="top:412.39px;font-size:15.07px;color:#1f232d;left:350.5px;transform:scaleX(0.9091);transform-origin:0 0">Inspection</span>
<div style="left:529px;top:407.75px;width:93.5px;height:26.25px;border-right:1px solid #dadbde"></div>
<span class="t" style="top:412.39px;font-size:15.07px;color:#1f232d;left:533.5px;transform:scaleX(0.9091);transform-origin:0 0">INT</span>
<div style="left:622.5px;top:407.75px;width:93.5px;height:26.25px;border-right:1px solid #dadbde"></div>
<span class="t" style="top:412.39px;font-size:15.07px;color:#1f232d;left:627.0px;transform:scaleX(0.9091);transform-origin:0 0">SER</span>
<div style="left:716px;top:407.75px;width:94px;height:26.25px;border-right:1px solid #dadbde"></div>
<span class="t" style="top:412.39px;font-size:15.07px;color:#1f232d;left:685.00px;width:120px;text-align:right;transform:scaleX(0.9091);transform-origin:100% 0">650.00</span>
<div style="left:810px;top:407.75px;width:94px;height:26.25px;border-right:1px solid #dadbde"></div>
<span class="t" style="top:412.39px;font-size:15.07px;color:#1f232d;left:814.5px;transform:scaleX(0.9091);transform-origin:0 0">ea</span>
<div style="left:904px;top:407.75px;width:93px;height:26.25px;border-right:1px solid #dadbde"></div>
<span class="t" style="top:412.39px;font-size:15.07px;color:#1f232d;left:908.5px;transform:scaleX(0.9091);transform-origin:0 0">VAT</span>
<div style="left:997px;top:407.75px;width:94px;height:26.25px;border-right:1px solid #dadbde"></div>
<span class="t" style="top:412.39px;font-size:15.07px;color:#1f232d;left:966.00px;width:120px;text-align:right;transform:scaleX(0.9091);transform-origin:100% 0">15.00</span>
<div style="left:1091px;top:407.75px;width:95px;height:26.25px;border-right:1px solid #dadbde"></div>
<span class="t" style="top:412.39px;font-size:15.07px;color:#1f232d;left:1095.5px;transform:scaleX(0.9091);transform-origin:0 0">A</span>
<div style="left:223px;top:434.00px;width:963px;height:26.25px;background:#ebebeb;border-bottom:1px solid #dadbde"></div>
<div style="left:204px;top:434.00px;width:19.5px;height:26.25px;background:#f5f5f8;border-right:1px solid #d6d7da;border-bottom:1px solid #dfe0e3"></div>
<div style="left:223px;top:434.00px;width:123px;height:26.25px;border-right:1px solid #dadbde"></div>
<span class="t" style="top:438.64px;font-size:15.07px;color:#1f232d;left:227.5px;transform:scaleX(0.9091);transform-origin:0 0">TOLL</span>
<div style="left:346px;top:434.00px;width:183px;height:26.25px;border-right:1px solid #dadbde"></div>
<span class="t" style="top:438.64px;font-size:15.07px;color:#1f232d;left:350.5px;transform:scaleX(0.9091);transform-origin:0 0">Toll Fee</span>
<div style="left:529px;top:434.00px;width:93.5px;height:26.25px;border-right:1px solid #dadbde"></div>
<span class="t" style="top:438.64px;font-size:15.07px;color:#1f232d;left:533.5px;transform:scaleX(0.9091);transform-origin:0 0">EXT</span>
<div style="left:622.5px;top:434.00px;width:93.5px;height:26.25px;border-right:1px solid #dadbde"></div>
<span class="t" style="top:438.64px;font-size:15.07px;color:#1f232d;left:627.0px;transform:scaleX(0.9091);transform-origin:0 0">SER</span>
<div style="left:716px;top:434.00px;width:94px;height:26.25px;border-right:1px solid #dadbde"></div>
<span class="t" style="top:438.64px;font-size:15.07px;color:#1f232d;left:685.00px;width:120px;text-align:right;transform:scaleX(0.9091);transform-origin:100% 0">250.00</span>
<div style="left:810px;top:434.00px;width:94px;height:26.25px;border-right:1px solid #dadbde"></div>
<span class="t" style="top:438.64px;font-size:15.07px;color:#1f232d;left:814.5px;transform:scaleX(0.9091);transform-origin:0 0">ea</span>
<div style="left:904px;top:434.00px;width:93px;height:26.25px;border-right:1px solid #dadbde"></div>
<span class="t" style="top:438.64px;font-size:15.07px;color:#1f232d;left:908.5px;transform:scaleX(0.9091);transform-origin:0 0">VAT</span>
<div style="left:997px;top:434.00px;width:94px;height:26.25px;border-right:1px solid #dadbde"></div>
<span class="t" style="top:438.64px;font-size:15.07px;color:#1f232d;left:966.00px;width:120px;text-align:right;transform:scaleX(0.9091);transform-origin:100% 0">0.00</span>
<div style="left:1091px;top:434.00px;width:95px;height:26.25px;border-right:1px solid #dadbde"></div>
<span class="t" style="top:438.64px;font-size:15.07px;color:#1f232d;left:1095.5px;transform:scaleX(0.9091);transform-origin:0 0">A</span>
<div style="left:223px;top:460.25px;width:963px;height:26.25px;background:#ebebeb;border-bottom:1px solid #dadbde"></div>
<div style="left:204px;top:460.25px;width:19.5px;height:26.25px;background:#f5f5f8;border-right:1px solid #d6d7da;border-bottom:1px solid #dfe0e3"></div>
<div style="left:223px;top:460.25px;width:123px;height:26.25px;border-right:1px solid #dadbde"></div>
<span class="t" style="top:464.89px;font-size:15.07px;color:#1f232d;left:227.5px;transform:scaleX(0.9091);transform-origin:0 0">MYS</span>
<div style="left:346px;top:460.25px;width:183px;height:26.25px;border-right:1px solid #dadbde"></div>
<span class="t" style="top:464.89px;font-size:15.07px;color:#1f232d;left:350.5px;transform:scaleX(0.9091);transform-origin:0 0">Meter Yield Short Fall</span>
<div style="left:529px;top:460.25px;width:93.5px;height:26.25px;border-right:1px solid #dadbde"></div>
<span class="t" style="top:464.89px;font-size:15.07px;color:#1f232d;left:533.5px;transform:scaleX(0.9091);transform-origin:0 0">INT</span>
<div style="left:622.5px;top:460.25px;width:93.5px;height:26.25px;border-right:1px solid #dadbde"></div>
<span class="t" style="top:464.89px;font-size:15.07px;color:#1f232d;left:627.0px;transform:scaleX(0.9091);transform-origin:0 0">SER</span>
<div style="left:716px;top:460.25px;width:94px;height:26.25px;border-right:1px solid #dadbde"></div>
<span class="t" style="top:464.89px;font-size:15.07px;color:#1f232d;left:685.00px;width:120px;text-align:right;transform:scaleX(0.9091);transform-origin:100% 0">500.00</span>
<div style="left:810px;top:460.25px;width:94px;height:26.25px;border-right:1px solid #dadbde"></div>
<span class="t" style="top:464.89px;font-size:15.07px;color:#1f232d;left:814.5px;transform:scaleX(0.9091);transform-origin:0 0">ea</span>
<div style="left:904px;top:460.25px;width:93px;height:26.25px;border-right:1px solid #dadbde"></div>
<span class="t" style="top:464.89px;font-size:15.07px;color:#1f232d;left:908.5px;transform:scaleX(0.9091);transform-origin:0 0">VAT</span>
<div style="left:997px;top:460.25px;width:94px;height:26.25px;border-right:1px solid #dadbde"></div>
<span class="t" style="top:464.89px;font-size:15.07px;color:#1f232d;left:966.00px;width:120px;text-align:right;transform:scaleX(0.9091);transform-origin:100% 0">15.00</span>
<div style="left:1091px;top:460.25px;width:95px;height:26.25px;border-right:1px solid #dadbde"></div>
<span class="t" style="top:464.89px;font-size:15.07px;color:#1f232d;left:1095.5px;transform:scaleX(0.9091);transform-origin:0 0">A</span>
<div style="left:223px;top:486.50px;width:963px;height:26.25px;background:#ebebeb;border-bottom:1px solid #dadbde"></div>
<div style="left:204px;top:486.50px;width:19.5px;height:26.25px;background:#f5f5f8;border-right:1px solid #d6d7da;border-bottom:1px solid #dfe0e3"></div>
<div style="left:223px;top:486.50px;width:123px;height:26.25px;border-right:1px solid #dadbde"></div>
<span class="t" style="top:491.14px;font-size:15.07px;color:#1f232d;left:227.5px;transform:scaleX(0.9091);transform-origin:0 0">CLA</span>
<div style="left:346px;top:486.50px;width:183px;height:26.25px;border-right:1px solid #dadbde"></div>
<span class="t" style="top:491.14px;font-size:15.07px;color:#1f232d;left:350.5px;transform:scaleX(0.9091);transform-origin:0 0">Cleaning Fee</span>
<div style="left:529px;top:486.50px;width:93.5px;height:26.25px;border-right:1px solid #dadbde"></div>
<span class="t" style="top:491.14px;font-size:15.07px;color:#1f232d;left:533.5px;transform:scaleX(0.9091);transform-origin:0 0">INT</span>
<div style="left:622.5px;top:486.50px;width:93.5px;height:26.25px;border-right:1px solid #dadbde"></div>
<span class="t" style="top:491.14px;font-size:15.07px;color:#1f232d;left:627.0px;transform:scaleX(0.9091);transform-origin:0 0">SER</span>
<div style="left:716px;top:486.50px;width:94px;height:26.25px;border-right:1px solid #dadbde"></div>
<span class="t" style="top:491.14px;font-size:15.07px;color:#1f232d;left:685.00px;width:120px;text-align:right;transform:scaleX(0.9091);transform-origin:100% 0">500.00</span>
<div style="left:810px;top:486.50px;width:94px;height:26.25px;border-right:1px solid #dadbde"></div>
<span class="t" style="top:491.14px;font-size:15.07px;color:#1f232d;left:814.5px;transform:scaleX(0.9091);transform-origin:0 0">ea</span>
<div style="left:904px;top:486.50px;width:93px;height:26.25px;border-right:1px solid #dadbde"></div>
<span class="t" style="top:491.14px;font-size:15.07px;color:#1f232d;left:908.5px;transform:scaleX(0.9091);transform-origin:0 0">VAT</span>
<div style="left:997px;top:486.50px;width:94px;height:26.25px;border-right:1px solid #dadbde"></div>
<span class="t" style="top:491.14px;font-size:15.07px;color:#1f232d;left:966.00px;width:120px;text-align:right;transform:scaleX(0.9091);transform-origin:100% 0">15.00</span>
<div style="left:1091px;top:486.50px;width:95px;height:26.25px;border-right:1px solid #dadbde"></div>
<span class="t" style="top:491.14px;font-size:15.07px;color:#1f232d;left:1095.5px;transform:scaleX(0.9091);transform-origin:0 0">A</span>
<div style="left:223px;top:512.75px;width:963px;height:26.25px;background:#ebebeb;border-bottom:1px solid #dadbde"></div>
<div style="left:204px;top:512.75px;width:19.5px;height:26.25px;background:#f5f5f8;border-right:1px solid #d6d7da;border-bottom:1px solid #dfe0e3"></div>
<div style="left:223px;top:512.75px;width:123px;height:26.25px;border-right:1px solid #dadbde"></div>
<span class="t" style="top:517.39px;font-size:15.07px;color:#1f232d;left:227.5px;transform:scaleX(0.9091);transform-origin:0 0">DES</span>
<div style="left:346px;top:512.75px;width:183px;height:26.25px;border-right:1px solid #dadbde"></div>
<span class="t" style="top:517.39px;font-size:15.07px;color:#1f232d;left:350.5px;transform:scaleX(0.9091);transform-origin:0 0">Design consultation</span>
<div style="left:529px;top:512.75px;width:93.5px;height:26.25px;border-right:1px solid #dadbde"></div>
<span class="t" style="top:517.39px;font-size:15.07px;color:#1f232d;left:533.5px;transform:scaleX(0.9091);transform-origin:0 0">INT</span>
<div style="left:622.5px;top:512.75px;width:93.5px;height:26.25px;border-right:1px solid #dadbde"></div>
<span class="t" style="top:517.39px;font-size:15.07px;color:#1f232d;left:627.0px;transform:scaleX(0.9091);transform-origin:0 0">SER</span>
<div style="left:716px;top:512.75px;width:94px;height:26.25px;border-right:1px solid #dadbde"></div>
<span class="t" style="top:517.39px;font-size:15.07px;color:#1f232d;left:685.00px;width:120px;text-align:right;transform:scaleX(0.9091);transform-origin:100% 0">750.00</span>
<div style="left:810px;top:512.75px;width:94px;height:26.25px;border-right:1px solid #dadbde"></div>
<span class="t" style="top:517.39px;font-size:15.07px;color:#1f232d;left:814.5px;transform:scaleX(0.9091);transform-origin:0 0">ea</span>
<div style="left:904px;top:512.75px;width:93px;height:26.25px;border-right:1px solid #dadbde"></div>
<span class="t" style="top:517.39px;font-size:15.07px;color:#1f232d;left:908.5px;transform:scaleX(0.9091);transform-origin:0 0">VAT</span>
<div style="left:997px;top:512.75px;width:94px;height:26.25px;border-right:1px solid #dadbde"></div>
<span class="t" style="top:517.39px;font-size:15.07px;color:#1f232d;left:966.00px;width:120px;text-align:right;transform:scaleX(0.9091);transform-origin:100% 0">15.00</span>
<div style="left:1091px;top:512.75px;width:95px;height:26.25px;border-right:1px solid #dadbde"></div>
<span class="t" style="top:517.39px;font-size:15.07px;color:#1f232d;left:1095.5px;transform:scaleX(0.9091);transform-origin:0 0">A</span>
<div style="left:223px;top:539.00px;width:963px;height:26.25px;background:#ebebeb;border-bottom:1px solid #dadbde"></div>
<div style="left:204px;top:539.00px;width:19.5px;height:26.25px;background:#f5f5f8;border-right:1px solid #d6d7da;border-bottom:1px solid #dfe0e3"></div>
<div style="left:223px;top:539.00px;width:123px;height:26.25px;border-right:1px solid #dadbde"></div>
<span class="t" style="top:543.64px;font-size:15.07px;color:#1f232d;left:227.5px;transform:scaleX(0.9091);transform-origin:0 0">PRI</span>
<div style="left:346px;top:539.00px;width:183px;height:26.25px;border-right:1px solid #dadbde"></div>
<span class="t" style="top:543.64px;font-size:15.07px;color:#1f232d;left:350.5px;transform:scaleX(0.9091);transform-origin:0 0">Printing</span>
<div style="left:529px;top:539.00px;width:93.5px;height:26.25px;border-right:1px solid #dadbde"></div>
<span class="t" style="top:543.64px;font-size:15.07px;color:#1f232d;left:533.5px;transform:scaleX(0.9091);transform-origin:0 0">INT</span>
<div style="left:622.5px;top:539.00px;width:93.5px;height:26.25px;border-right:1px solid #dadbde"></div>
<span class="t" style="top:543.64px;font-size:15.07px;color:#1f232d;left:627.0px;transform:scaleX(0.9091);transform-origin:0 0">SER</span>
<div style="left:716px;top:539.00px;width:94px;height:26.25px;border-right:1px solid #dadbde"></div>
<span class="t" style="top:543.64px;font-size:15.07px;color:#1f232d;left:685.00px;width:120px;text-align:right;transform:scaleX(0.9091);transform-origin:100% 0">350.00</span>
<div style="left:810px;top:539.00px;width:94px;height:26.25px;border-right:1px solid #dadbde"></div>
<span class="t" style="top:543.64px;font-size:15.07px;color:#1f232d;left:814.5px;transform:scaleX(0.9091);transform-origin:0 0">ea</span>
<div style="left:904px;top:539.00px;width:93px;height:26.25px;border-right:1px solid #dadbde"></div>
<span class="t" style="top:543.64px;font-size:15.07px;color:#1f232d;left:908.5px;transform:scaleX(0.9091);transform-origin:0 0">VAT</span>
<div style="left:997px;top:539.00px;width:94px;height:26.25px;border-right:1px solid #dadbde"></div>
<span class="t" style="top:543.64px;font-size:15.07px;color:#1f232d;left:966.00px;width:120px;text-align:right;transform:scaleX(0.9091);transform-origin:100% 0">15.00</span>
<div style="left:1091px;top:539.00px;width:95px;height:26.25px;border-right:1px solid #dadbde"></div>
<span class="t" style="top:543.64px;font-size:15.07px;color:#1f232d;left:1095.5px;transform:scaleX(0.9091);transform-origin:0 0">A</span>
<div style="left:223px;top:565.25px;width:963px;height:26.25px;background:#ebebeb;border-bottom:1px solid #dadbde"></div>
<div style="left:204px;top:565.25px;width:19.5px;height:26.25px;background:#f5f5f8;border-right:1px solid #d6d7da;border-bottom:1px solid #dfe0e3"></div>
<div style="left:223px;top:565.25px;width:123px;height:26.25px;border-right:1px solid #dadbde"></div>
<span class="t" style="top:569.89px;font-size:15.07px;color:#1f232d;left:227.5px;transform:scaleX(0.9091);transform-origin:0 0">TEST</span>
<div style="left:346px;top:565.25px;width:183px;height:26.25px;border-right:1px solid #dadbde"></div>
<span class="t" style="top:569.89px;font-size:15.07px;color:#1f232d;left:350.5px;transform:scaleX(0.9091);transform-origin:0 0">Test Service</span>
<div style="left:529px;top:565.25px;width:93.5px;height:26.25px;border-right:1px solid #dadbde"></div>
<span class="t" style="top:569.89px;font-size:15.07px;color:#1f232d;left:533.5px;transform:scaleX(0.9091);transform-origin:0 0">INT</span>
<div style="left:622.5px;top:565.25px;width:93.5px;height:26.25px;border-right:1px solid #dadbde"></div>
<span class="t" style="top:569.89px;font-size:15.07px;color:#1f232d;left:627.0px;transform:scaleX(0.9091);transform-origin:0 0">SER</span>
<div style="left:716px;top:565.25px;width:94px;height:26.25px;border-right:1px solid #dadbde"></div>
<span class="t" style="top:569.89px;font-size:15.07px;color:#1f232d;left:685.00px;width:120px;text-align:right;transform:scaleX(0.9091);transform-origin:100% 0">550.00</span>
<div style="left:810px;top:565.25px;width:94px;height:26.25px;border-right:1px solid #dadbde"></div>
<span class="t" style="top:569.89px;font-size:15.07px;color:#1f232d;left:814.5px;transform:scaleX(0.9091);transform-origin:0 0">ea</span>
<div style="left:904px;top:565.25px;width:93px;height:26.25px;border-right:1px solid #dadbde"></div>
<span class="t" style="top:569.89px;font-size:15.07px;color:#1f232d;left:908.5px;transform:scaleX(0.9091);transform-origin:0 0">VAT</span>
<div style="left:997px;top:565.25px;width:94px;height:26.25px;border-right:1px solid #dadbde"></div>
<span class="t" style="top:569.89px;font-size:15.07px;color:#1f232d;left:966.00px;width:120px;text-align:right;transform:scaleX(0.9091);transform-origin:100% 0">15.00</span>
<div style="left:1091px;top:565.25px;width:95px;height:26.25px;border-right:1px solid #dadbde"></div>
<span class="t" style="top:569.89px;font-size:15.07px;color:#1f232d;left:1095.5px;transform:scaleX(0.9091);transform-origin:0 0">A</span>
<div style="left:223px;top:591.50px;width:963px;height:26.25px;background:#ebebeb;border-bottom:1px solid #dadbde"></div>
<div style="left:204px;top:591.50px;width:19.5px;height:26.25px;background:#f5f5f8;border-right:1px solid #d6d7da;border-bottom:1px solid #dfe0e3"></div>
<div style="left:223px;top:591.50px;width:123px;height:26.25px;border-right:1px solid #dadbde"></div>
<span class="t" style="top:596.14px;font-size:15.07px;color:#1f232d;left:227.5px;transform:scaleX(0.9091);transform-origin:0 0">INST</span>
<div style="left:346px;top:591.50px;width:183px;height:26.25px;border-right:1px solid #dadbde"></div>
<span class="t" style="top:596.14px;font-size:15.07px;color:#1f232d;left:350.5px;transform:scaleX(0.9091);transform-origin:0 0">Installation Fee</span>
<div style="left:529px;top:591.50px;width:93.5px;height:26.25px;border-right:1px solid #dadbde"></div>
<span class="t" style="top:596.14px;font-size:15.07px;color:#1f232d;left:533.5px;transform:scaleX(0.9091);transform-origin:0 0">INT</span>
<div style="left:622.5px;top:591.50px;width:93.5px;height:26.25px;border-right:1px solid #dadbde"></div>
<span class="t" style="top:596.14px;font-size:15.07px;color:#1f232d;left:627.0px;transform:scaleX(0.9091);transform-origin:0 0">SER</span>
<div style="left:716px;top:591.50px;width:94px;height:26.25px;border-right:1px solid #dadbde"></div>
<span class="t" style="top:596.14px;font-size:15.07px;color:#1f232d;left:685.00px;width:120px;text-align:right;transform:scaleX(0.9091);transform-origin:100% 0">1,200.00</span>
<div style="left:810px;top:591.50px;width:94px;height:26.25px;border-right:1px solid #dadbde"></div>
<span class="t" style="top:596.14px;font-size:15.07px;color:#1f232d;left:814.5px;transform:scaleX(0.9091);transform-origin:0 0">ea</span>
<div style="left:904px;top:591.50px;width:93px;height:26.25px;border-right:1px solid #dadbde"></div>
<span class="t" style="top:596.14px;font-size:15.07px;color:#1f232d;left:908.5px;transform:scaleX(0.9091);transform-origin:0 0">VAT</span>
<div style="left:997px;top:591.50px;width:94px;height:26.25px;border-right:1px solid #dadbde"></div>
<span class="t" style="top:596.14px;font-size:15.07px;color:#1f232d;left:966.00px;width:120px;text-align:right;transform:scaleX(0.9091);transform-origin:100% 0">15.00</span>
<div style="left:1091px;top:591.50px;width:95px;height:26.25px;border-right:1px solid #dadbde"></div>
<span class="t" style="top:596.14px;font-size:15.07px;color:#1f232d;left:1095.5px;transform:scaleX(0.9091);transform-origin:0 0">A</span>
<div style="left:223px;top:617.75px;width:963px;height:26.25px;background:#ebebeb;border-bottom:1px solid #dadbde"></div>
<div style="left:204px;top:617.75px;width:19.5px;height:26.25px;background:#f5f5f8;border-right:1px solid #d6d7da;border-bottom:1px solid #dfe0e3"></div>
<div style="left:223px;top:617.75px;width:123px;height:26.25px;border-right:1px solid #dadbde"></div>
<span class="t" style="top:622.39px;font-size:15.07px;color:#1f232d;left:227.5px;transform:scaleX(0.9091);transform-origin:0 0">CALL</span>
<div style="left:346px;top:617.75px;width:183px;height:26.25px;border-right:1px solid #dadbde"></div>
<span class="t" style="top:622.39px;font-size:15.07px;color:#1f232d;left:350.5px;transform:scaleX(0.9091);transform-origin:0 0">Call Out Fee</span>
<div style="left:529px;top:617.75px;width:93.5px;height:26.25px;border-right:1px solid #dadbde"></div>
<span class="t" style="top:622.39px;font-size:15.07px;color:#1f232d;left:533.5px;transform:scaleX(0.9091);transform-origin:0 0">INT</span>
<div style="left:622.5px;top:617.75px;width:93.5px;height:26.25px;border-right:1px solid #dadbde"></div>
<span class="t" style="top:622.39px;font-size:15.07px;color:#1f232d;left:627.0px;transform:scaleX(0.9091);transform-origin:0 0">SER</span>
<div style="left:716px;top:617.75px;width:94px;height:26.25px;border-right:1px solid #dadbde"></div>
<span class="t" style="top:622.39px;font-size:15.07px;color:#1f232d;left:685.00px;width:120px;text-align:right;transform:scaleX(0.9091);transform-origin:100% 0">450.00</span>
<div style="left:810px;top:617.75px;width:94px;height:26.25px;border-right:1px solid #dadbde"></div>
<span class="t" style="top:622.39px;font-size:15.07px;color:#1f232d;left:814.5px;transform:scaleX(0.9091);transform-origin:0 0">ea</span>
<div style="left:904px;top:617.75px;width:93px;height:26.25px;border-right:1px solid #dadbde"></div>
<span class="t" style="top:622.39px;font-size:15.07px;color:#1f232d;left:908.5px;transform:scaleX(0.9091);transform-origin:0 0">VAT</span>
<div style="left:997px;top:617.75px;width:94px;height:26.25px;border-right:1px solid #dadbde"></div>
<span class="t" style="top:622.39px;font-size:15.07px;color:#1f232d;left:966.00px;width:120px;text-align:right;transform:scaleX(0.9091);transform-origin:100% 0">15.00</span>
<div style="left:1091px;top:617.75px;width:95px;height:26.25px;border-right:1px solid #dadbde"></div>
<span class="t" style="top:622.39px;font-size:15.07px;color:#1f232d;left:1095.5px;transform:scaleX(0.9091);transform-origin:0 0">A</span>
<svg style="left:210px;top:416.25px" width="6" height="10" viewBox="0 0 6 10"><polygon points="0.5,0.5 5.8,5 0.5,9.5" fill="#1c1f2b"/></svg>
<div style="left:201px;top:407px;width:22px;height:27px;border:3px solid #3f64dc"></div>
<div style="left:5px;top:884px;width:1440px;height:35px;background:linear-gradient(#dbdce0,#d1d2d7);border:1px solid #babbc1;border-top:none"></div>
<span class="t" style="top:894.92px;font-size:14.74px;color:#2e3241;left:15.9px;transform:scaleX(0.9091);transform-origin:0 0">Open Windows</span>
<svg style="left:110px;top:899px" width="9" height="5" viewBox="0 0 9 5"><polygon points="0,0 9,0 4.5,5" fill="#2e3241"/></svg>
<div style="left:949px;top:888px;width:1px;height:27px;background:#b9bac0;box-shadow:1px 0 0 #eeeef1"></div>
<div style="left:1066px;top:888px;width:1px;height:27px;background:#b9bac0;box-shadow:1px 0 0 #eeeef1"></div>
<div style="left:1158px;top:888px;width:1px;height:27px;background:#b9bac0;box-shadow:1px 0 0 #eeeef1"></div>
<div style="left:1288px;top:888px;width:1px;height:27px;background:#b9bac0;box-shadow:1px 0 0 #eeeef1"></div>
<span class="t" style="top:894.87px;font-size:14.69px;color:#2e3241;left:962px;transform:scaleX(0.9091);transform-origin:0 0">User : JulandaK</span>
<span class="t" style="top:894.50px;font-size:15.13px;color:#2e3241;left:1077.7px;transform:scaleX(0.9091);transform-origin:0 0">15/02/2021</span>
<span class="t" style="top:894.40px;font-size:15.24px;color:#2e3241;left:1168.3px;transform:scaleX(0.9091);transform-origin:0 0">Version : 2.4.0.11</span>
<span class="t" style="top:894.96px;font-size:14.58px;color:#2e3241;left:1297.6px;transform:scaleX(0.9091);transform-origin:0 0">Example Company</span>
<svg style="left:1428px;top:900px" width="14" height="14" viewBox="0 0 14 14"><path d="M13 2 L2 13 M13 6 L6 13 M13 10 L10 13" stroke="#8e9096" stroke-width="1.2"/></svg>
<svg style="left:0;top:0" width="1449" height="924" viewBox="0 0 1449 924"><line x1="350" y1="20" x2="503.0" y2="18.9" stroke="#3f64dc" stroke-width="3"/><polygon points="518.0,18.8 501.1,26.4 500.9,11.4" fill="#3f64dc"/><line x1="391" y1="172" x2="427.2" y2="101.4" stroke="#3f64dc" stroke-width="3"/><polygon points="434.0,88.0 432.9,106.6 419.6,99.7" fill="#3f64dc"/><line x1="636" y1="177" x2="582.9" y2="136.1" stroke="#3f64dc" stroke-width="3"/><polygon points="571.0,127.0 589.0,131.4 579.9,143.3" fill="#3f64dc"/><line x1="213.5" y1="214" x2="212.1" y2="388.0" stroke="#3f64dc" stroke-width="3"/><polygon points="212.0,403.0 204.6,385.9 219.6,386.1" fill="#3f64dc"/><line x1="301" y1="710.5" x2="145.6" y2="676.2" stroke="#3f64dc" stroke-width="3"/><polygon points="131.0,673.0 149.2,669.3 146.0,684.0" fill="#3f64dc"/><circle cx="337.7" cy="20.8" r="14.8" fill="#3f64dc"/><text x="337.7" y="27.1" font-size="17.5" font-family="Liberation Sans" fill="#0b1129" text-anchor="middle">1</text><circle cx="384.8" cy="185" r="14.8" fill="#3f64dc"/><text x="384.8" y="191.3" font-size="17.5" font-family="Liberation Sans" fill="#0b1129" text-anchor="middle">2</text><circle cx="646.9" cy="185.7" r="14.8" fill="#3f64dc"/><text x="646.9" y="192.0" font-size="17.5" font-family="Liberation Sans" fill="#0b1129" text-anchor="middle">3</text><circle cx="214" cy="200" r="14.8" fill="#3f64dc"/><text x="214" y="206.3" font-size="17.5" font-family="Liberation Sans" fill="#0b1129" text-anchor="middle">4</text><circle cx="315.5" cy="713.3" r="14.8" fill="#3f64dc"/><text x="315.5" y="719.5999999999999" font-size="17.5" font-family="Liberation Sans" fill="#0b1129" text-anchor="middle">5</text></svg>
</div></body></html>
